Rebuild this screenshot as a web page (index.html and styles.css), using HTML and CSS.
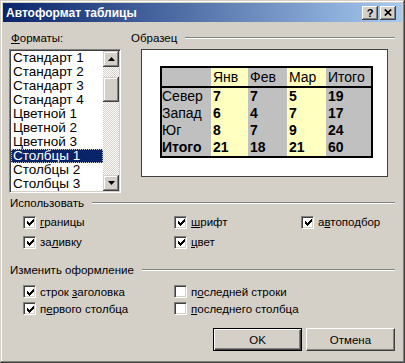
FILE: index.html
```html
<!DOCTYPE html>
<html lang="ru">
<head>
    <meta charset="UTF-8">
    <title>Автоформат таблицы</title>
    <link rel="stylesheet" href="styles.css">
</head>
<body>
    <div class="window">
        <div class="titlebar">
            <span class="title">Автоформат таблицы</span>
            <span class="tb-btns">
                <span class="tb-btn help">?</span>
                <span class="tb-btn"><svg width="8" height="7" viewBox="0 0 8 7"><path d="M0.8 0.5 L7.2 6.5 M7.2 0.5 L0.8 6.5" stroke="#000" stroke-width="1.7" fill="none"/></svg></span>
            </span>
        </div>

        <div class="client">
            <div class="top">
                <div class="formats">
                    <div class="label"><u>Ф</u>орматы:</div>
                    <div class="listbox">
                        <ul class="items">
                            <li>Стандарт 1</li>
                            <li>Стандарт 2</li>
                            <li>Стандарт 3</li>
                            <li>Стандарт 4</li>
                            <li>Цветной 1</li>
                            <li>Цветной 2</li>
                            <li>Цветной 3</li>
                            <li class="sel">Столбцы 1</li>
                            <li>Столбцы 2</li>
                            <li>Столбцы 3</li>
                        </ul>
                        <div class="vscroll">
                            <div class="sb-btn"><svg width="7" height="4" viewBox="0 0 7 4"><polygon points="0,4 3.5,0 7,4" fill="#000"/></svg></div>
                            <div class="sb-track short"></div>
                            <div class="sb-thumb"></div>
                            <div class="sb-track"></div>
                            <div class="sb-btn"><svg width="7" height="4" viewBox="0 0 7 4"><polygon points="0,0 7,0 3.5,4" fill="#000"/></svg></div>
                        </div>
                    </div>
                </div>

                <div class="sample">
                    <div class="group-head"><span>Образец</span><span class="etch"></span></div>
                    <div class="preview">
                        <table class="demo">
                            <colgroup>
                                <col class="c1"><col class="c2"><col class="c3"><col class="c4"><col class="c5">
                            </colgroup>
                            <thead>
                                <tr><th class="g"></th><th class="y">Янв</th><th class="g">Фев</th><th class="y">Мар</th><th class="g">Итого</th></tr>
                            </thead>
                            <tbody>
                                <tr><td class="g">Север</td><td class="y b">7</td><td class="g b">7</td><td class="y b">5</td><td class="g b">19</td></tr>
                                <tr><td class="g">Запад</td><td class="y b">6</td><td class="g b">4</td><td class="y b">7</td><td class="g b">17</td></tr>
                                <tr><td class="g">Юг</td><td class="y b">8</td><td class="g b">7</td><td class="y b">9</td><td class="g b">24</td></tr>
                                <tr><td class="g b">Итого</td><td class="y b">21</td><td class="g b">18</td><td class="y b">21</td><td class="g b">60</td></tr>
                            </tbody>
                        </table>
                    </div>
                </div>
            </div>

            <div class="group first">
                <div class="group-head"><span>Использовать</span><span class="etch"></span></div>
                <div class="checks wide">
                    <label class="check"><span class="cb"><svg width="7" height="7" viewBox="0 0 7 7"><path d="M0 2h1v1h1v1h1v-1h1v-1h1v-1h1v-1h1v3h-1v1h-1v1h-1v1h-1v1h-1v-1h-1v-1h-1z" fill="#000"/></svg></span><span><u>г</u>раницы</span></label>
                    <label class="check"><span class="cb"><svg width="7" height="7" viewBox="0 0 7 7"><path d="M0 2h1v1h1v1h1v-1h1v-1h1v-1h1v-1h1v3h-1v1h-1v1h-1v1h-1v1h-1v-1h-1v-1h-1z" fill="#000"/></svg></span><span><u>ш</u>рифт</span></label>
                    <label class="check"><span class="cb"><svg width="7" height="7" viewBox="0 0 7 7"><path d="M0 2h1v1h1v1h1v-1h1v-1h1v-1h1v-1h1v3h-1v1h-1v1h-1v1h-1v1h-1v-1h-1v-1h-1z" fill="#000"/></svg></span><span>а<u>в</u>топодбор</span></label>
                    <label class="check"><span class="cb"><svg width="7" height="7" viewBox="0 0 7 7"><path d="M0 2h1v1h1v1h1v-1h1v-1h1v-1h1v-1h1v3h-1v1h-1v1h-1v1h-1v1h-1v-1h-1v-1h-1z" fill="#000"/></svg></span><span>за<u>л</u>ивку</span></label>
                    <label class="check"><span class="cb"><svg width="7" height="7" viewBox="0 0 7 7"><path d="M0 2h1v1h1v1h1v-1h1v-1h1v-1h1v-1h1v3h-1v1h-1v1h-1v1h-1v1h-1v-1h-1v-1h-1z" fill="#000"/></svg></span><span><u>ц</u>вет</span></label>
                </div>
            </div>

            <div class="group second">
                <div class="group-head"><span>Изменить оформление</span><span class="etch"></span></div>
                <div class="checks">
                    <label class="check"><span class="cb"><svg width="7" height="7" viewBox="0 0 7 7"><path d="M0 2h1v1h1v1h1v-1h1v-1h1v-1h1v-1h1v3h-1v1h-1v1h-1v1h-1v1h-1v-1h-1v-1h-1z" fill="#000"/></svg></span><span>строк <u>з</u>аголовка</span></label>
                    <label class="check"><span class="cb"></span><span>п<u>о</u>следней строки</span></label>
                    <label class="check"><span class="cb"><svg width="7" height="7" viewBox="0 0 7 7"><path d="M0 2h1v1h1v1h1v-1h1v-1h1v-1h1v-1h1v3h-1v1h-1v1h-1v1h-1v1h-1v-1h-1v-1h-1z" fill="#000"/></svg></span><span>п<u>е</u>рвого столбца</span></label>
                    <label class="check"><span class="cb"></span><span><u>п</u>оследнего столбца</span></label>
                </div>
            </div>

            <div class="actions">
                <button class="btn default">OK</button>
                <button class="btn">Отмена</button>
            </div>
        </div>
    </div>
</body>
</html>
```

FILE: styles.css
```css
body {
    margin: 0;
    background: #d4d0c8;
    font-family: "Liberation Sans", Arial, sans-serif;
    font-size: 11.5px;
    color: #000;
}
.window {
    width: 405px;
    height: 363px;
    box-sizing: border-box;
    padding: 3px;
    background: #d4d0c8;
    box-shadow: inset -1px -1px #404040, inset 1px 1px #d4d0c8, inset -2px -2px #808080, inset 2px 2px #fff;
    display: flex;
    flex-direction: column;
}
.titlebar {
    height: 19px;
    display: flex;
    align-items: center;
    justify-content: space-between;
    padding: 0 6px 0 3px;
    background: linear-gradient(90deg, #0a246a, #a6caf0);
    color: #fff;
    font-weight: bold;
    font-size: 12px;
}
.tb-btns {
    display: flex;
    gap: 2px;
}
.tb-btn {
    width: 16px;
    height: 14px;
    box-sizing: border-box;
    display: flex;
    align-items: center;
    justify-content: center;
    background: #d4d0c8;
    color: #000;
    font-size: 11px;
    box-shadow: inset -1px -1px #404040, inset 1px 1px #fff, inset -2px -2px #808080;
}
.client {
    flex: 1;
    padding: 9px 7px 0 6px;
    display: flex;
    flex-direction: column;
}
.top {
    display: flex;
    gap: 9px;
}
.label {
    height: 14px;
    line-height: 14px;
    padding-left: 2px;
    margin-bottom: 4px;
}
.listbox {
    width: 112px;
    height: 144px;
    box-sizing: border-box;
    display: flex;
    padding: 1px;
    background: #fff;
    border: 1px solid;
    border-color: #808080 #fff #fff #808080;
    box-shadow: inset 1px 1px #404040, inset -1px -1px #d4d0c8;
}
.items {
    flex: 1;
    list-style: none;
    margin: 0;
    padding: 0;
    font-size: 13.5px;
    line-height: 14px;
    overflow: hidden;
}
.items li {
    height: 14px;
    padding-left: 2px;
    white-space: nowrap;
}
.items li.sel {
    background: #0a246a;
    color: #fff;
    outline: 1px dotted #c8c8c8;
    outline-offset: -1px;
}
.vscroll {
    width: 16px;
    display: flex;
    flex-direction: column;
}
.sb-btn, .sb-thumb {
    box-sizing: border-box;
    background: #d4d0c8;
    box-shadow: inset -1px -1px #404040, inset 1px 1px #d4d0c8, inset -2px -2px #808080, inset 2px 2px #fff;
}
.sb-btn {
    height: 16px;
    display: flex;
    align-items: center;
    justify-content: center;
}
.sb-thumb {
    height: 25px;
}
.sb-track {
    flex: 1;
    background: repeating-conic-gradient(#fff 0 25%, #d4d0c8 0 50%) 0 0 / 2px 2px;
}
.sb-track.short {
    flex: 0 0 10px;
}
.sample {
    flex: 1;
}
.group-head {
    height: 14px;
    display: flex;
    align-items: center;
    white-space: nowrap;
    padding-left: 1px;
}
.etch {
    flex: 1;
    margin-left: 8px;
    border-top: 1px solid #808080;
    border-bottom: 1px solid #fff;
}
.sample .group-head {
    margin-bottom: 4px;
}
.preview {
    height: 128px;
    box-sizing: border-box;
    margin: 0 7px 0 11px;
    padding: 16px 0 0 18px;
    background: #fff;
    border: 1px solid #404040;
}
.demo {
    width: 213px;
    table-layout: fixed;
    border-collapse: separate;
    border-spacing: 0;
    border: 2px solid #000;
    font-family: "Liberation Sans", Arial, sans-serif;
    font-size: 14px;
}
.demo .c1 { width: 49px; }
.demo .c2 { width: 37px; }
.demo .c3 { width: 39px; }
.demo .c4 { width: 39px; }
.demo .c5 { width: 45px; }
.demo th, .demo td {
    padding: 0 0 0 2px;
    text-align: left;
    white-space: nowrap;
    overflow: hidden;
}
.demo th {
    height: 18px;
    line-height: 18px;
    font-weight: normal;
    border-bottom: 2px solid #000;
}
.demo td {
    height: 17px;
    line-height: 17px;
}
.demo th:first-child, .demo td:first-child {
    padding-left: 0;
}
.demo .g { background: #c0c0c0; }
.demo .y { background: #ffffc0; }
.demo .b { font-weight: bold; }
.group.first {
    margin-top: 3px;
}
.group.second {
    margin-top: 11px;
}
.checks {
    display: grid;
    grid-template-columns: 151px 127px auto;
    grid-auto-rows: 20px;
    align-items: center;
    padding-left: 14px;
    margin-top: 2px;
}
.second .checks {
    grid-template-columns: 151px auto;
    grid-auto-rows: 17px;
    margin-top: 6px;
}
.check {
    display: flex;
    align-items: center;
    gap: 4px;
    white-space: nowrap;
}
.cb {
    width: 13px;
    height: 13px;
    box-sizing: border-box;
    border: 1px solid;
    border-color: #808080 #fff #fff #808080;
    box-shadow: inset 1px 1px #404040, inset -1px -1px #d4d0c8;
    background: #fff;
    display: flex;
    align-items: center;
    justify-content: center;
    padding: 1px 0 0 1px;
}
.cb svg {
    display: block;
}
.actions {
    display: flex;
    justify-content: flex-end;
    gap: 4px;
    margin-top: 11px;
}
.btn {
    width: 89px;
    height: 23px;
    box-sizing: border-box;
    padding: 0;
    font-family: inherit;
    font-size: 11.5px;
    color: #000;
    background: #d4d0c8;
    border: 1px solid;
    border-color: #fff #404040 #404040 #fff;
    box-shadow: inset -1px -1px #808080;
}
.btn.default {
    border-color: #000;
    box-shadow: inset 1px 1px #fff, inset -1px -1px #404040, inset -2px -2px #808080;
}
```
